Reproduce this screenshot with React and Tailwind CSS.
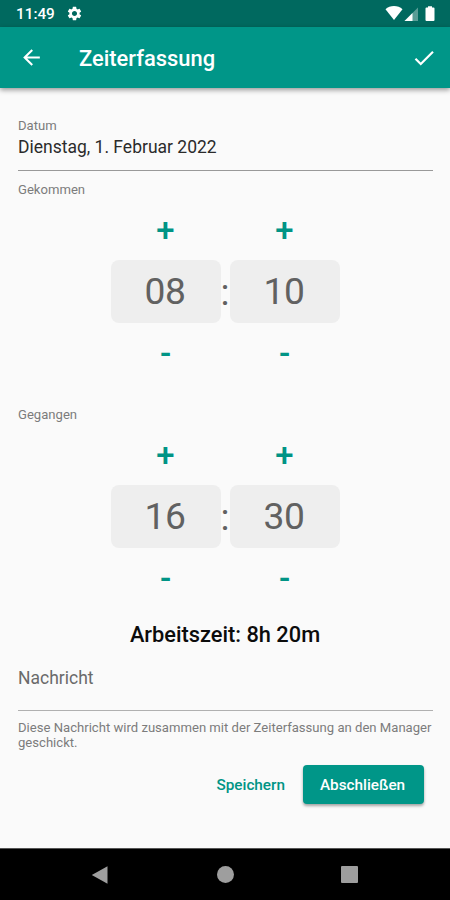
import { useState } from "react";
import { MdArrowBack, MdCheck, MdSettings } from "react-icons/md";

const pad = (n) => String(n).padStart(2, "0");

function StatusBar() {
  return (
    <div className="flex h-[27px] shrink-0 items-center justify-between bg-[#00695f] pr-[15px] pl-4 text-white">
      <div className="flex items-center">
        <span className="w-[40px] pt-[3px] text-[15.3px] leading-none font-medium whitespace-nowrap">11:49</span>
        <MdSettings className="ml-[10px] mt-px size-[17px]" />
      </div>
      <svg className="mt-px h-4 w-[50px]" viewBox="0 0 50 16" fill="currentColor">
        <path d="M0.5 3.2C2.8 1.1 5.7 0 9 0s6.2 1.1 8.5 3.2L9 14Z" />
        <path d="M33 1.5v13.5H19.5Z" opacity="0.35" />
        <path d="M27.5 7v8h-8Z" />
        <path d="M43 0.2h4v1.3h1.5a1 1 0 0 1 1 1v11.6a1 1 0 0 1-1 1h-7a1 1 0 0 1-1-1V2.5a1 1 0 0 1 1-1H43Z" />
      </svg>
    </div>
  );
}

function TimeColumn({ value, onChange }) {
  return (
    <div className="flex w-[110px] flex-col items-center">
      <button onClick={() => onChange(1)} className="h-[60px] w-full pt-px text-[33px] leading-[60px] font-medium text-[#009485]">+</button>
      <div className="flex h-[63px] w-full items-center justify-center rounded-lg bg-[#eeeeee] pt-px pr-px text-[37.2px] font-normal tracking-[-0.4px] text-[#616161]">
        {pad(value)}
      </div>
      <button onClick={() => onChange(-1)} className="h-[60px] w-full pt-px text-[33px] leading-[60px] font-medium text-[#009485]">-</button>
    </div>
  );
}

function TimePicker({ label, hours, minutes }) {
  const [h, setH] = useState(hours);
  const [m, setM] = useState(minutes);

  return (
    <section className="h-[225px]">
      <p className="h-[19px] text-[13.1px] leading-[19px] text-[#7c7c7c]">{label}</p>
      <div className="mt-px mr-px flex justify-center">
        <TimeColumn value={h} onChange={(step) => setH((h + step + 24) % 24)} />
        <span className="mt-[61px] w-[9px] text-center text-[37.2px] leading-[63px] text-[#616161]">:</span>
        <TimeColumn value={m} onChange={(step) => setM((m + step + 60) % 60)} />
      </div>
    </section>
  );
}

export default function App() {
  return (
    <div className="flex h-[900px] w-[450px] flex-col overflow-hidden bg-[#fafafa] font-['Roboto',sans-serif]">
      <StatusBar />
      <header className="z-10 flex h-[61px] shrink-0 items-center bg-[#009688] pr-[13px] pl-[19px] text-white shadow-[0_2px_5px_rgba(0,0,0,0.4)]">
        <MdArrowBack className="size-[25px]" />
        <h1 className="ml-[35px] flex-1 pt-[3px] text-[21.9px] font-medium">Zeiterfassung</h1>
        <MdCheck className="size-[26px]" />
      </header>

      <main className="flex flex-1 flex-col pr-[17px] pl-[18px]">
        <div className="mt-[30px] h-[53px] border-b border-[#999999]">
          <p className="text-[13.1px] leading-4 text-[#7c7c7c]">Datum</p>
          <p className="mt-px text-[17.5px] leading-6 text-[#2b2b2b]">Dienstag, 1. Februar 2022</p>
        </div>
        <div className="mt-[9px]">
          <TimePicker label="Gekommen" hours={8} minutes={10} />
          <TimePicker label="Gegangen" hours={16} minutes={30} />
        </div>
        <p className="-mt-[9px] mr-px text-center text-[21.8px] leading-7 font-medium text-[#0c0c0c]">Arbeitszeit: 8h 20m</p>
        <div className="mt-[17px] h-[45px] border-b border-[#b0b0b0] text-[17.5px] leading-6 text-[#6a6a6a]">Nachricht</div>
        <p className="mt-[9px] text-[13.1px] leading-[15px] text-[#7c7c7c]">
          Diese Nachricht wird zusammen mit der Zeiterfassung an den Manager geschickt.
        </p>
        <div className="mt-[15px] mr-[9px] flex items-center justify-end gap-[18px]">
          <button className="pt-0.5 text-[15.3px] font-medium text-[#009485]">Speichern</button>
          <button className="h-[39px] w-[121px] rounded-[4px] bg-[#009688] pt-0.5 pr-0.5 text-[15.3px] font-medium text-white shadow-[0_2px_3px_rgba(0,0,0,0.35)]">
            Abschließen
          </button>
        </div>
      </main>

      <nav className="flex h-[52px] shrink-0 items-center justify-between border-t border-[#555555] bg-black pr-[92px] pl-[91px] text-[#9e9e9e]">
        <svg className="size-[18px]" viewBox="0 0 18 18" fill="currentColor"><path d="M0.8 9 16.5 0.3V17.7Z" /></svg>
        <span className="size-[17px] rounded-full bg-current" />
        <span className="size-[17px] rounded-[1px] bg-current" />
      </nav>
    </div>
  );
}
